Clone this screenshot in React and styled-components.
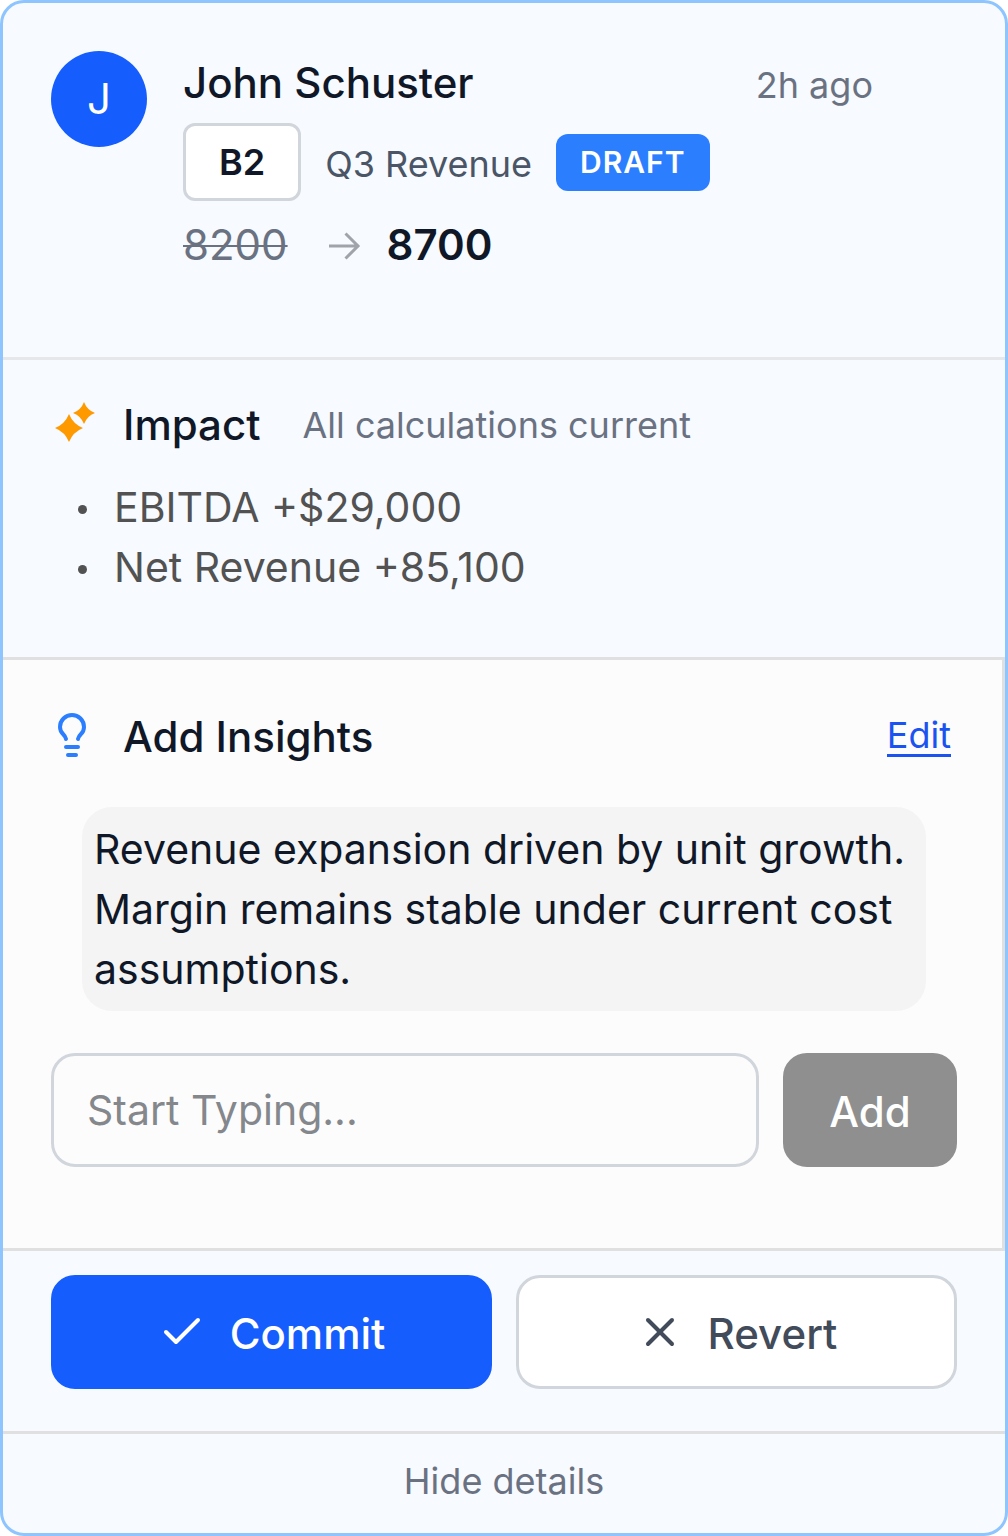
import React, { useState } from "react";
import styled, { createGlobalStyle } from "styled-components";
import { Check, Lightbulb, X } from "lucide-react";

const GlobalStyle = createGlobalStyle`
  * {
    box-sizing: border-box;
  }

  body {
    margin: 0;
    background: #fff;
    color: #101828;
    font-family: Inter, "Liberation Sans", sans-serif;
    font-size: 42px;
    line-height: 60px;
  }

  button,
  input {
    font: inherit;
  }
`;

const Card = styled.article`
  border: 3px solid #8ec5ff;
  border-radius: 24px;
  background: #f7faff;
  overflow: hidden;
`;

const Header = styled.header`
  display: flex;
  align-items: flex-start;
  gap: 36px;
  padding: 48px 48px 81px;
  border-bottom: 3px solid #e5e7eb;
`;

const Avatar = styled.div`
  display: flex;
  align-items: center;
  justify-content: center;
  flex-shrink: 0;
  width: 96px;
  height: 96px;
  border-radius: 50%;
  background: #155dfc;
  color: #fff;
`;

const Summary = styled.div`
  flex: 1;
`;

const TitleRow = styled.div`
  display: flex;
  align-items: baseline;
  justify-content: space-between;
  padding-right: 84px;
`;

const Title = styled.h2`
  margin: 0;
  font-size: 42px;
  font-weight: 500;
  line-height: 63px;
`;

const Muted = styled.span`
  color: #6a7282;
  font-size: 36px;
  line-height: 54px;
`;

const CellRow = styled.div`
  display: flex;
  align-items: center;
  gap: 24px;
  margin-top: 9px;
`;

const CellRef = styled.span`
  padding: 9px 33px;
  border: 3px solid #d1d5dc;
  border-radius: 12px;
  background: #fff;
  font-size: 36px;
  font-weight: 600;
  line-height: 54px;
`;

const CellLabel = styled.span`
  padding-top: 4px;
  color: #4a5565;
  font-size: 36px;
`;

const Badge = styled.span`
  padding: 6px 24px;
  border-radius: 12px;
  background: #2b7fff;
  color: #fff;
  font-size: 30px;
  font-weight: 600;
  line-height: 45px;
  letter-spacing: 1px;
`;

const ValueRow = styled.div`
  display: flex;
  align-items: center;
  margin-top: 12px;
  line-height: 63px;

  svg {
    margin: 0 21px 0 36px;
  }
`;

const OldValue = styled.del`
  color: #6a7282;
  text-decoration-thickness: 2px;
`;

const NewValue = styled.strong`
  font-weight: 600;
`;

const Impact = styled.section`
  padding: 33px 48px 60px;
`;

const SectionHeading = styled.div`
  display: flex;
  align-items: center;
  margin-left: -3px;

  svg {
    flex-shrink: 0;
    margin: 0 27px 3px 0;
  }

  ${Muted} {
    margin-left: 42px;
  }
`;

const ImpactList = styled.ul`
  margin: 21px 0 0;
  padding: 0 0 0 27px;
  list-style: none;
  color: #525252;
  font-size: 41px;

  li {
    display: flex;
    align-items: center;
    gap: 27px;
  }

  li::before {
    content: "";
    width: 9px;
    height: 9px;
    margin-top: 4px;
    border-radius: 50%;
    background: #525252;
  }
`;

const Insights = styled.section`
  padding: 45px 45px 81px 48px;
  border: 3px solid #e0e0e0;
  border-left: none;
  background: #fcfcfc;
`;

const EditLink = styled.a`
  margin-left: auto;
  margin-right: 6px;
  border-bottom: 3px solid #1a53f0;
  color: #1a53f0;
  font-size: 36px;
  line-height: 38px;
  text-decoration: none;
`;

const Note = styled.p`
  margin: 39px 31px 42px;
  padding: 12px;
  border-radius: 30px;
  background: #f4f4f4;
  font-size: 41px;
`;

const InsightForm = styled.form`
  display: flex;
  gap: 24px;
`;

const InsightInput = styled.input`
  flex: 1;
  min-width: 0;
  height: 114px;
  padding: 0 33px;
  border: 3px solid #d1d5dc;
  border-radius: 24px;
  background: transparent;
  color: #101828;
  font-size: 41px;

  &::placeholder {
    color: #84878c;
    opacity: 1;
  }
`;

const Button = styled.button`
  display: flex;
  align-items: center;
  justify-content: center;
  gap: 24px;
  flex: ${(props) => (props.$fill ? 1 : "none")};
  min-width: 174px;
  height: 114px;
  padding: 0 24px;
  border: 3px solid ${(props) => props.$border || props.$bg};
  border-radius: 24px;
  background: ${(props) => props.$bg};
  color: ${(props) => props.$color || "#fff"};
  font-weight: 500;
  cursor: pointer;
`;

const ButtonLabel = styled.span`
  padding-top: 4px;
`;

const Actions = styled.div`
  display: flex;
  gap: 24px;
  padding: 24px 48px 42px;
  border-bottom: 3px solid #e0e0e0;
`;

const DetailsToggle = styled.button`
  display: block;
  width: 100%;
  padding: 20px 0 25px;
  border: none;
  background: none;
  color: #6a7282;
  font-size: 36px;
  line-height: 54px;
  cursor: pointer;
`;

const ArrowIcon = () => (
  <svg width="42" height="42" viewBox="0 0 42 42" fill="none" stroke="#a0a4aa" strokeWidth="3" aria-hidden="true">
    <path d="M5 22H35M21.500 9.500 34 22 21.500 34.500" />
  </svg>
);

const SparklesIcon = () => (
  <svg width="48" height="48" viewBox="0 0 48 48" fill="#fe9a00" aria-hidden="true">
    <path d="M21 15Q25 25 35 29Q25 33 21 43Q17 33 7 29Q17 25 21 15Z" />
    <path d="M36 3Q39 11 47 14Q39 17 36 25Q33 17 25 14Q33 11 36 3Z" />
  </svg>
);

const impacts = ["EBITDA +$29,000", "Net Revenue +85,100"];

const App = () => {
  const [insight, setInsight] = useState("");
  const [note, setNote] = useState(
    "Revenue expansion driven by unit growth. Margin remains stable under current cost assumptions."
  );

  const handleAdd = (e) => {
    e.preventDefault();
    if (insight.trim() === "") {
      return;
    }
    setNote(`${note} ${insight.trim()}`);
    setInsight("");
  };

  const handleEdit = (e) => {
    e.preventDefault();
    setInsight(note);
  };

  return (
    <>
      <GlobalStyle />
      <Card>
        <Header>
          <Avatar>J</Avatar>
          <Summary>
            <TitleRow>
              <Title>John Schuster</Title>
              <Muted>2h ago</Muted>
            </TitleRow>
            <CellRow>
              <CellRef>B2</CellRef>
              <CellLabel>Q3 Revenue</CellLabel>
              <Badge>DRAFT</Badge>
            </CellRow>
            <ValueRow>
              <OldValue>8200</OldValue>
              <ArrowIcon />
              <NewValue>8700</NewValue>
            </ValueRow>
          </Summary>
        </Header>

        <Impact>
          <SectionHeading>
            <SparklesIcon />
            <Title>Impact</Title>
            <Muted>All calculations current</Muted>
          </SectionHeading>
          <ImpactList>
            {impacts.map((item) => (
              <li key={item}>{item}</li>
            ))}
          </ImpactList>
        </Impact>

        <Insights>
          <SectionHeading>
            <Lightbulb size={48} color="#2b7fff" />
            <Title>Add Insights</Title>
            <EditLink href="#edit" onClick={handleEdit}>
              Edit
            </EditLink>
          </SectionHeading>
          <Note>{note}</Note>
          <InsightForm onSubmit={handleAdd}>
            <InsightInput
              type="text"
              aria-label="New insight"
              placeholder="Start Typing..."
              value={insight}
              onChange={(e) => setInsight(e.target.value)}
            />
            <Button type="submit" $bg="#8f8f8f">
              <ButtonLabel>Add</ButtonLabel>
            </Button>
          </InsightForm>
        </Insights>

        <Actions>
          <Button type="button" $fill $bg="#155dfc">
            <Check size={48} />
            <ButtonLabel>Commit</ButtonLabel>
          </Button>
          <Button type="button" $fill $bg="#fff" $border="#d1d5dc" $color="#414b5a">
            <X size={48} />
            <ButtonLabel>Revert</ButtonLabel>
          </Button>
        </Actions>
        <DetailsToggle type="button">Hide details</DetailsToggle>
      </Card>
    </>
  );
};

export default App;
